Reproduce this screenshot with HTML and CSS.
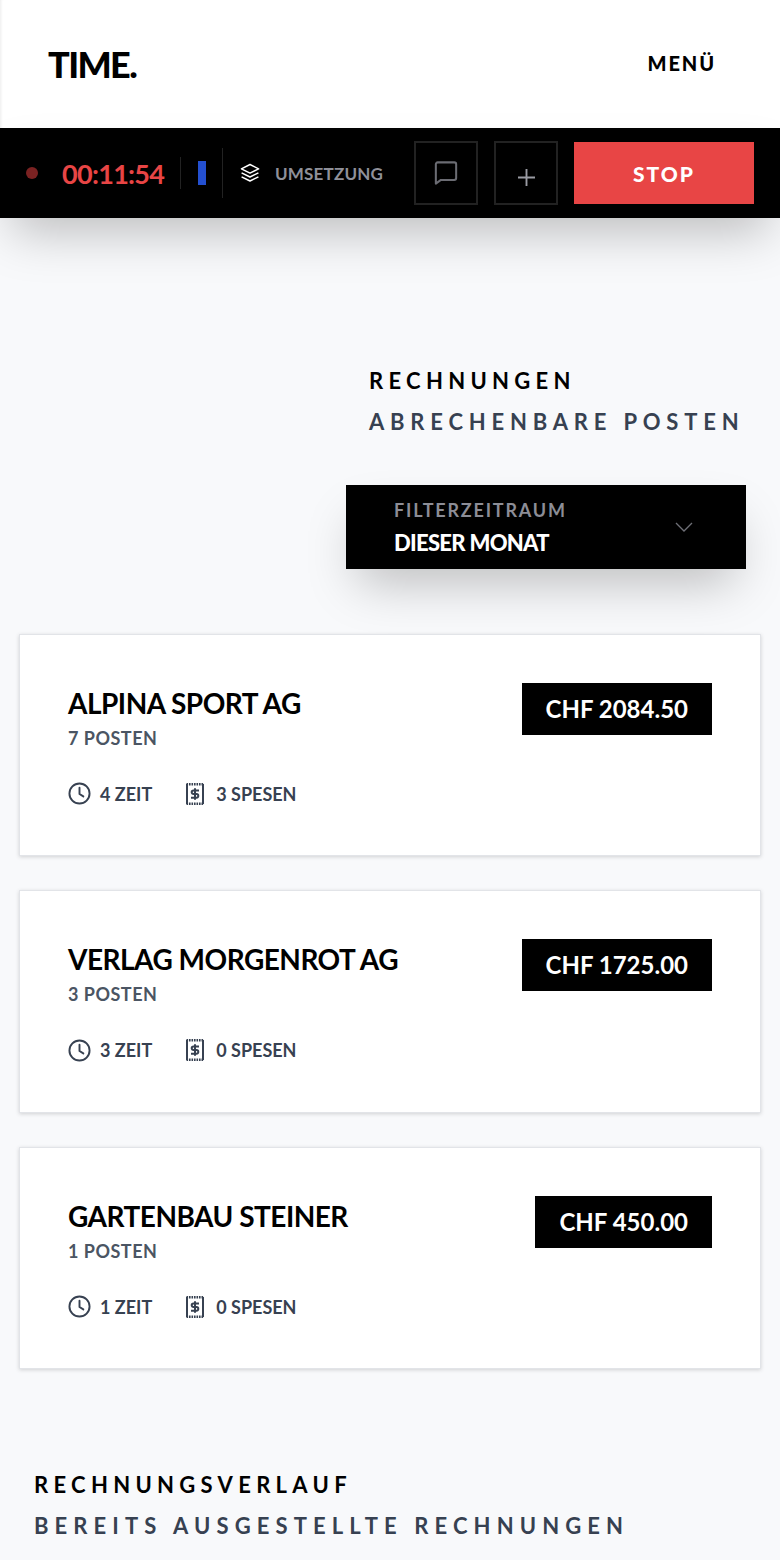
FILE: index.html
```html
<!DOCTYPE html>
<html lang="de">
<head>
<meta charset="utf-8">
<title>Time</title>
<link rel="stylesheet" href="styles.css">
</head>
<body>
<header class="top">
  <div class="logo">TIME.</div>
  <div class="menu">MENÜ</div>
</header>
<div class="timer">
  <span class="dot"></span>
  <span class="clock">00:11:54</span>
  <span class="sep short"></span>
  <span class="swatch"></span>
  <span class="sep tall"></span>
  <svg class="layers" viewBox="0 0 20 20" fill="none" stroke="#fff" stroke-width="1.5" stroke-linejoin="round"><path d="M10 1.5 18.600 5.800 10 10.100 1.400 5.800Z"/><path d="M1.600 9.800 10 14l8.400-4.200"/><path d="M1.600 13.800 10 18l8.400-4.200"/></svg>
  <span class="task">UMSETZUNG</span>
  <button class="ghost"><svg class="bubble" viewBox="0 0 26 26" fill="none" stroke="#6b6c73" stroke-width="2.2" stroke-linejoin="round"><path d="M4 1.500h18a2 2 0 0 1 2 2v15a2 2 0 0 1-2 2H7.500L2 24.500V3.500a2 2 0 0 1 2-2Z"/></svg></button>
  <button class="ghost"><svg class="plus" viewBox="0 0 18 18" fill="none" stroke="#9a9ba3" stroke-width="2"><path d="M9 0v18M0 9h18"/></svg></button>
  <button class="stop">STOP</button>
</div>
<main>
  <section class="invoices">
    <div class="heading-block">
      <h1 class="title">RECHNUNGEN</h1>
      <p class="subtitle">ABRECHENBARE POSTEN</p>
    </div>
    <div class="filter">
      <div class="filter-text">
        <span class="filter-label">FILTERZEITRAUM</span>
        <span class="filter-value">DIESER MONAT</span>
      </div>
      <svg class="chev" viewBox="0 0 18 10" fill="none" stroke="#6f7077" stroke-width="1.300"><path d="M1 1l8 8 8-8"/></svg>
    </div>
    <article class="card">
      <div class="card-head">
        <div>
          <h2 class="client">ALPINA SPORT AG</h2>
          <div class="count">7 POSTEN</div>
        </div>
        <div class="amount">CHF 2084.50</div>
      </div>
      <div class="meta">
        <span class="meta-item"><svg class="ic-clock" viewBox="0 0 24 24" fill="none" stroke="#374151" stroke-width="2" stroke-linecap="round" stroke-linejoin="round"><circle cx="12" cy="12" r="10.500"/><path d="M12 6v6.500l4 2.500"/></svg>4 ZEIT</span>
        <span class="meta-item receipt"><svg class="ic-receipt" viewBox="0 0 18 22" fill="none" stroke="#374151"><path stroke-width="2.400" stroke-dasharray="1.600 .9" d="M.5 1.200h17M.5 20.800h17"/><path stroke-width="2" d="M1 1v20M17 1v20"/><path stroke-width="2" d="M13 7.500H7.500a1.800 1.800 0 0 0 0 3.600h3a1.800 1.800 0 0 1 0 3.600H5M9 5.300v11.400"/></svg>3 SPESEN</span>
      </div>
    </article>
    <article class="card">
      <div class="card-head">
        <div>
          <h2 class="client">VERLAG MORGENROT AG</h2>
          <div class="count">3 POSTEN</div>
        </div>
        <div class="amount">CHF 1725.00</div>
      </div>
      <div class="meta">
        <span class="meta-item"><svg class="ic-clock" viewBox="0 0 24 24" fill="none" stroke="#374151" stroke-width="2" stroke-linecap="round" stroke-linejoin="round"><circle cx="12" cy="12" r="10.500"/><path d="M12 6v6.500l4 2.500"/></svg>3 ZEIT</span>
        <span class="meta-item receipt"><svg class="ic-receipt" viewBox="0 0 18 22" fill="none" stroke="#374151"><path stroke-width="2.400" stroke-dasharray="1.600 .9" d="M.5 1.200h17M.5 20.800h17"/><path stroke-width="2" d="M1 1v20M17 1v20"/><path stroke-width="2" d="M13 7.500H7.500a1.800 1.800 0 0 0 0 3.600h3a1.800 1.800 0 0 1 0 3.600H5M9 5.300v11.400"/></svg>0 SPESEN</span>
      </div>
    </article>
    <article class="card">
      <div class="card-head">
        <div>
          <h2 class="client">GARTENBAU STEINER</h2>
          <div class="count">1 POSTEN</div>
        </div>
        <div class="amount">CHF 450.00</div>
      </div>
      <div class="meta">
        <span class="meta-item"><svg class="ic-clock" viewBox="0 0 24 24" fill="none" stroke="#374151" stroke-width="2" stroke-linecap="round" stroke-linejoin="round"><circle cx="12" cy="12" r="10.500"/><path d="M12 6v6.500l4 2.500"/></svg>1 ZEIT</span>
        <span class="meta-item receipt"><svg class="ic-receipt" viewBox="0 0 18 22" fill="none" stroke="#374151"><path stroke-width="2.400" stroke-dasharray="1.600 .9" d="M.5 1.200h17M.5 20.800h17"/><path stroke-width="2" d="M1 1v20M17 1v20"/><path stroke-width="2" d="M13 7.500H7.500a1.800 1.800 0 0 0 0 3.600h3a1.800 1.800 0 0 1 0 3.600H5M9 5.300v11.400"/></svg>0 SPESEN</span>
      </div>
    </article>
  </section>
  <section class="history">
    <h2 class="title">RECHNUNGSVERLAUF</h2>
    <p class="subtitle subtitle-long">BEREITS AUSGESTELLTE RECHNUNGEN</p>
  </section>
</main>
</body>
</html>
```
FILE: styles.css
```css
* { box-sizing: border-box; }
html, body { margin: 0; padding: 0; }
body {
  height: 1560px;
  overflow: hidden;
  background: #f8f9fb;
  color: #000;
  font-family: "Lato", "Liberation Sans", sans-serif;
}
.top {
  height: 128px;
  background: #fff;
  display: flex;
  align-items: center;
  justify-content: space-between;
  padding: 0 64px 0 48px;
  box-shadow: inset 3px 0 3px -2px rgba(0, 0, 0, .08);
}
.logo { font-size: 36px; font-weight: 900; letter-spacing: -1.600px; line-height: 1; }
.menu { font-size: 20px; font-weight: 900; letter-spacing: 1.900px; line-height: 1; margin-top: -3px; }
.timer {
  position: relative;
  height: 90px;
  background: #000;
  display: flex;
  align-items: center;
  padding-left: 26px;
  box-shadow: 0 25px 50px -12px rgba(0, 0, 0, .25);
}
.dot { width: 12px; height: 12px; border-radius: 50%; background: #7b2222; margin-right: 24px; }
.clock { width: 102px; font-size: 27px; font-weight: 700; color: #e84545; letter-spacing: -.7px; white-space: nowrap; }
.sep { width: 1px; background: #222; }
.sep.short { height: 32px; margin-left: 16px; }
.sep.tall { height: 50px; margin-left: 16px; }
.swatch { width: 8px; height: 24px; background: #2450d0; margin-left: 17px; }
.layers { width: 20px; height: 20px; margin-left: 17px; }
.task { width: 123px; margin-left: 15px; font-size: 17px; font-weight: 700; letter-spacing: .2px; color: #8f9099; white-space: nowrap; }
.ghost {
  width: 64px;
  height: 64px;
  margin-left: 16px;
  padding: 0;
  background: none;
  border: 2px solid #222;
  display: flex;
  align-items: center;
  justify-content: center;
}
.bubble { width: 24px; height: 24px; }
.plus { width: 17px; height: 17px; margin-top: 8px; }
.stop {
  width: 180px;
  height: 62px;
  margin-left: 16px;
  border: 0;
  background: #e84545;
  color: #fff;
  font-family: inherit;
  font-size: 21px;
  font-weight: 900;
  letter-spacing: 2px;
}
.invoices { padding: 150px 19px 0; }
.heading-block { padding-left: 350px; }
.title { margin: 0; font-size: 22px; line-height: 26px; font-weight: 700; letter-spacing: 5.300px; color: #000; }
.subtitle { margin: 15px 0 0; font-size: 22px; line-height: 26px; font-weight: 700; letter-spacing: 5.800px; color: #374151; white-space: nowrap; }
.subtitle-long { letter-spacing: 6.100px; }
.filter {
  width: 400px;
  height: 84px;
  margin: 50px 0 64.900px 327px;
  background: #000;
  display: flex;
  align-items: center;
  justify-content: space-between;
  padding: 0 53px 0 48px;
  box-shadow: 0 25px 50px -12px rgba(0, 0, 0, .25);
}
.filter-text { display: flex; flex-direction: column; gap: 9px; }
.filter-label { font-size: 18px; line-height: 22px; font-weight: 700; letter-spacing: 1.800px; color: #8c8d96; }
.filter-value { font-size: 22px; line-height: 26px; font-weight: 900; letter-spacing: -.7px; color: #fff; }
.chev { width: 18px; height: 10px; }
.card {
  height: 222.500px;
  margin-bottom: 34px;
  background: #fff;
  border: 1px solid #e2e4e8;
  box-shadow: 0 1px 4px rgba(0, 0, 0, .16);
  padding: 48px 48px 0;
}
.card-head { display: flex; justify-content: space-between; align-items: flex-start; }
.client { margin: 4px 0 0; font-size: 28px; line-height: 32px; font-weight: 700; letter-spacing: -.5px; color: #000; }
.count { margin-top: 8px; font-size: 18px; line-height: 22px; font-weight: 700; letter-spacing: .5px; color: #4b5563; }
.amount { height: 52px; padding: 0 24px; background: #000; color: #fff; font-size: 24px; line-height: 52px; font-weight: 700; white-space: nowrap; }
.meta { display: flex; gap: 34px; margin-top: 33px; }
.meta-item { display: flex; align-items: center; gap: 9px; font-size: 18px; line-height: 24px; font-weight: 700; color: #374151; white-space: nowrap; }
.meta-item.receipt { gap: 12px; }
.ic-clock { width: 23px; height: 23px; }
.ic-receipt { width: 18px; height: 22px; }
.history { padding: 69px 34px 0; }
```
